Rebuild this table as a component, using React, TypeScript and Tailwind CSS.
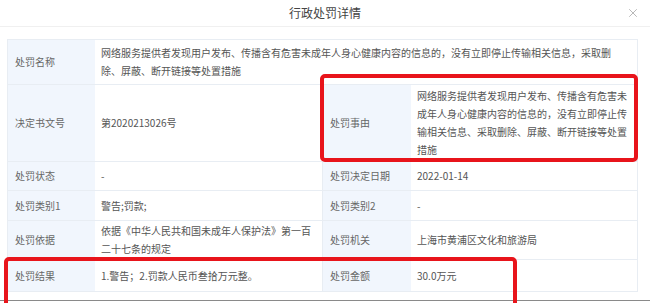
import { X } from "lucide-react";

type Cell = { label: string; value: string };
type Row = { height: string; cells: Cell[] };

const rows: Row[] = [
  {
    height: "h-[44px]",
    cells: [
      {
        label: "处罚名称",
        value:
          "网络服务提供者发现用户发布、传播含有危害未成年人身心健康内容的信息的，没有立即停止传输相关信息，采取删除、屏蔽、断开链接等处置措施",
      },
    ],
  },
  {
    height: "h-[77px]",
    cells: [
      { label: "决定书文号", value: "第2020213026号" },
      {
        label: "处罚事由",
        value:
          "网络服务提供者发现用户发布、传播含有危害未成年人身心健康内容的信息的，没有立即停止传输相关信息、采取删除、屏蔽、断开链接等处置措施",
      },
    ],
  },
  {
    height: "h-[29px]",
    cells: [
      { label: "处罚状态", value: "-" },
      { label: "处罚决定日期", value: "2022-01-14" },
    ],
  },
  {
    height: "h-[30px]",
    cells: [
      { label: "处罚类别1", value: "警告;罚款;" },
      { label: "处罚类别2", value: "-" },
    ],
  },
  {
    height: "h-[39px]",
    cells: [
      { label: "处罚依据", value: "依据《中华人民共和国未成年人保护法》第一百二十七条的规定" },
      { label: "处罚机关", value: "上海市黄浦区文化和旅游局" },
    ],
  },
  {
    height: "h-[32px]",
    cells: [
      { label: "处罚结果", value: "1.警告；2.罚款人民币叁拾万元整。" },
      { label: "处罚金额", value: "30.0万元" },
    ],
  },
];

export default function App() {
  return (
    <div
      className="relative w-[650px] h-[303px] overflow-hidden bg-white text-[10px] leading-[18px] text-[#555]"
      style={{ fontFamily: '"Noto Sans CJK SC", "Noto Sans", sans-serif' }}
    >
      {/* header */}
      <div className="relative flex h-[27px] items-center justify-center border-b border-[#f0f0f0]">
        <span className="text-[12px] text-[#444]">行政处罚详情</span>
        <X className="absolute right-[10px] top-[6px] h-[14px] w-[14px] text-[#999]" strokeWidth={1.2} />
      </div>

      {/* table */}
      <div className="ml-[7px] mt-[12px] w-[631px] border border-[#e8edf3]">
        {rows.map((row, i) => (
          <div key={i} className={`flex ${row.height} ${i > 0 ? "border-t border-[#e8edf3]" : ""}`}>
            {row.cells.map((cell, j) => {
              const full = row.cells.length === 1;
              return (
                <div key={j} className={`flex ${full ? "w-full" : j === 0 ? "w-[315px]" : "flex-1"}`}>
                  <div
                    className={`flex shrink-0 items-center bg-[#f1f6fd] pl-[7px] text-[#666] ${
                      j === 0 ? "w-[87px]" : "w-[88px]"
                    }`}
                  >
                    {cell.label}
                  </div>
                  <div
                    className={`flex flex-1 items-center pl-[6px] ${full ? "pr-[14px]" : "pr-[6px]"} ${
                      j === 0 && !full ? "border-r border-[#e8edf3]" : ""
                    }`}
                  >
                    <p>{cell.value}</p>
                  </div>
                </div>
              );
            })}
          </div>
        ))}
      </div>

      {/* dialog edge */}
      <div className="absolute left-0 right-0 top-[300px] h-px bg-[#8a8a8a]"></div>

      {/* red annotation boxes */}
      <div className="absolute left-[320px] top-[74px] h-[88px] w-[318px] rounded-[5px] border-[4px] border-[#e8141b]"></div>
      <div className="absolute left-[4px] top-[257px] h-[60px] w-[513px] rounded-[5px] border-[4px] border-[#e8141b]"></div>
    </div>
  );
}
